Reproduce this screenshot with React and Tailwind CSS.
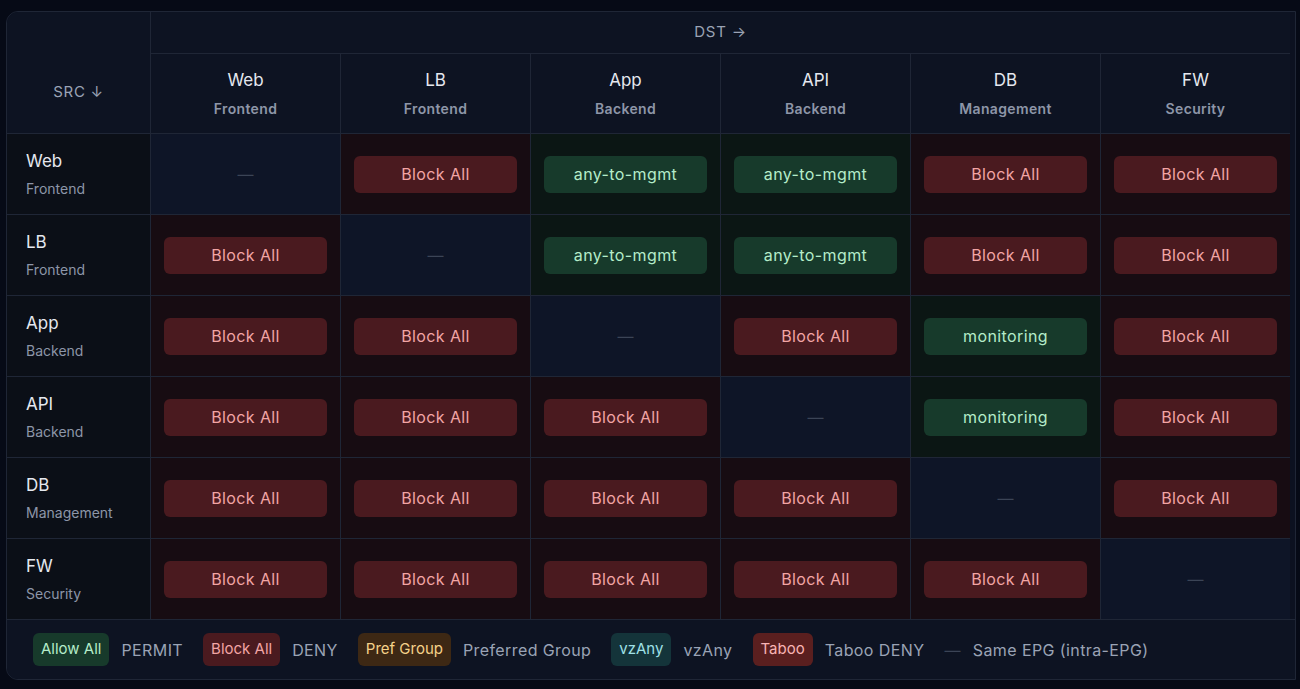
import React from "react";

const epgs = [
	["Web", "Frontend"],
	["LB", "Frontend"],
	["App", "Backend"],
	["API", "Backend"],
	["DB", "Management"],
	["FW", "Security"],
];

const matrix = [
	[null, "d", "any-to-mgmt", "any-to-mgmt", "d", "d"],
	["d", null, "any-to-mgmt", "any-to-mgmt", "d", "d"],
	["d", "d", null, "d", "monitoring", "d"],
	["d", "d", "d", null, "monitoring", "d"],
	["d", "d", "d", "d", null, "d"],
	["d", "d", "d", "d", "d", null],
];

function Cell({ v }) {
	if (v === null)
		return (
			<div className="h-[81px] border-l border-t border-[#1f2636] bg-[#0e1527] flex items-center justify-center text-[#3b4456]">
				—
			</div>
		);
	if (v === "d")
		return (
			<div className="h-[81px] border-l border-t border-[#1f2636] bg-[#170c12] flex items-center justify-center">
				<div className="w-[163px] h-[37px] rounded-md bg-[#4a1a1f] text-[#f2a5a5] text-[16px] tracking-wide flex items-center justify-center">
					Block All
				</div>
			</div>
		);
	return (
		<div className="h-[81px] border-l border-t border-[#1f2636] bg-[#0b1614] flex items-center justify-center">
			<div className="w-[163px] h-[37px] rounded-md bg-[#173a2b] text-[#b4ecc9] text-[16px] tracking-wide flex items-center justify-center">
				{v}
			</div>
		</div>
	);
}

function Legend({ label, cls, text }) {
	return (
		<div className="flex items-center gap-3">
			<span className={`px-2 py-[5px] rounded-md text-[15px] ${cls}`}>{label}</span>
			<span className="text-[16px] text-[#9aa3b5] tracking-wide">{text}</span>
		</div>
	);
}

export default function App() {
	return (
		<div
			className="w-screen h-[689px] bg-[#060a16] pt-[11px] pl-[6px] overflow-hidden"
			style={{ fontFamily: "Inter, 'Noto Sans', sans-serif" }}
		>
			<div className="w-[1290px] rounded-tl-xl rounded-bl-xl border border-[#1f2636] bg-[#0c1120] overflow-hidden">
				<div className="grid grid-cols-[143px_repeat(6,190px)] grid-rows-[41px_80px_repeat(6,81px)]">
					<div className="row-span-2 bg-[#0d1322] flex items-center justify-center pt-[40px] text-[15px] tracking-wider text-[#9aa3b5]">
						SRC ↓
					</div>
					<div className="col-span-6 border-l border-[#1f2636] bg-[#0d1322] flex items-center justify-center text-[15px] tracking-wider text-[#9aa3b5]">
						DST →
					</div>
					{epgs.map(([n, s]) => (
						<div
							key={n}
							className="border-l border-t border-[#1f2636] bg-[#0d1322] flex flex-col items-center justify-center gap-1"
						>
							<div className="text-[17px] text-[#e5e8ef]">{n}</div>
							<div className="text-[14px] font-semibold tracking-wide text-[#8d96a8]">{s}</div>
						</div>
					))}
					{matrix.map((row, i) => (
						<React.Fragment key={i}>
							<div className="border-t border-[#1f2636] bg-[#0b0f17] flex flex-col justify-center pl-[19px] gap-1">
								<div className="text-[17px] text-[#e5e8ef]">{epgs[i][0]}</div>
								<div className="text-[14px] text-[#8d96a8]">{epgs[i][1]}</div>
							</div>
							{row.map((v, j) => (
								<Cell key={j} v={v} />
							))}
						</React.Fragment>
					))}
				</div>
				<div className="h-[60px] border-t border-[#1f2636] bg-[#0d1322] flex items-center gap-5 pl-[26px]">
					<Legend label="Allow All" cls="bg-[#173a2b] text-[#b4ecc9]" text="PERMIT" />
					<Legend label="Block All" cls="bg-[#4a1a1f] text-[#f2a5a5]" text="DENY" />
					<Legend label="Pref Group" cls="bg-[#3d2814] text-[#f5d28a]" text="Preferred Group" />
					<Legend label="vzAny" cls="bg-[#14343a] text-[#9fe0e6]" text="vzAny" />
					<Legend label="Taboo" cls="bg-[#5a1f1f] text-[#f8b4b4]" text="Taboo DENY" />
					<div className="flex items-center gap-3 text-[16px] text-[#9aa3b5] tracking-wide">
						<span className="text-[#3b4456]">—</span>
						<span>Same EPG (intra-EPG)</span>
					</div>
				</div>
			</div>
		</div>
	);
}
